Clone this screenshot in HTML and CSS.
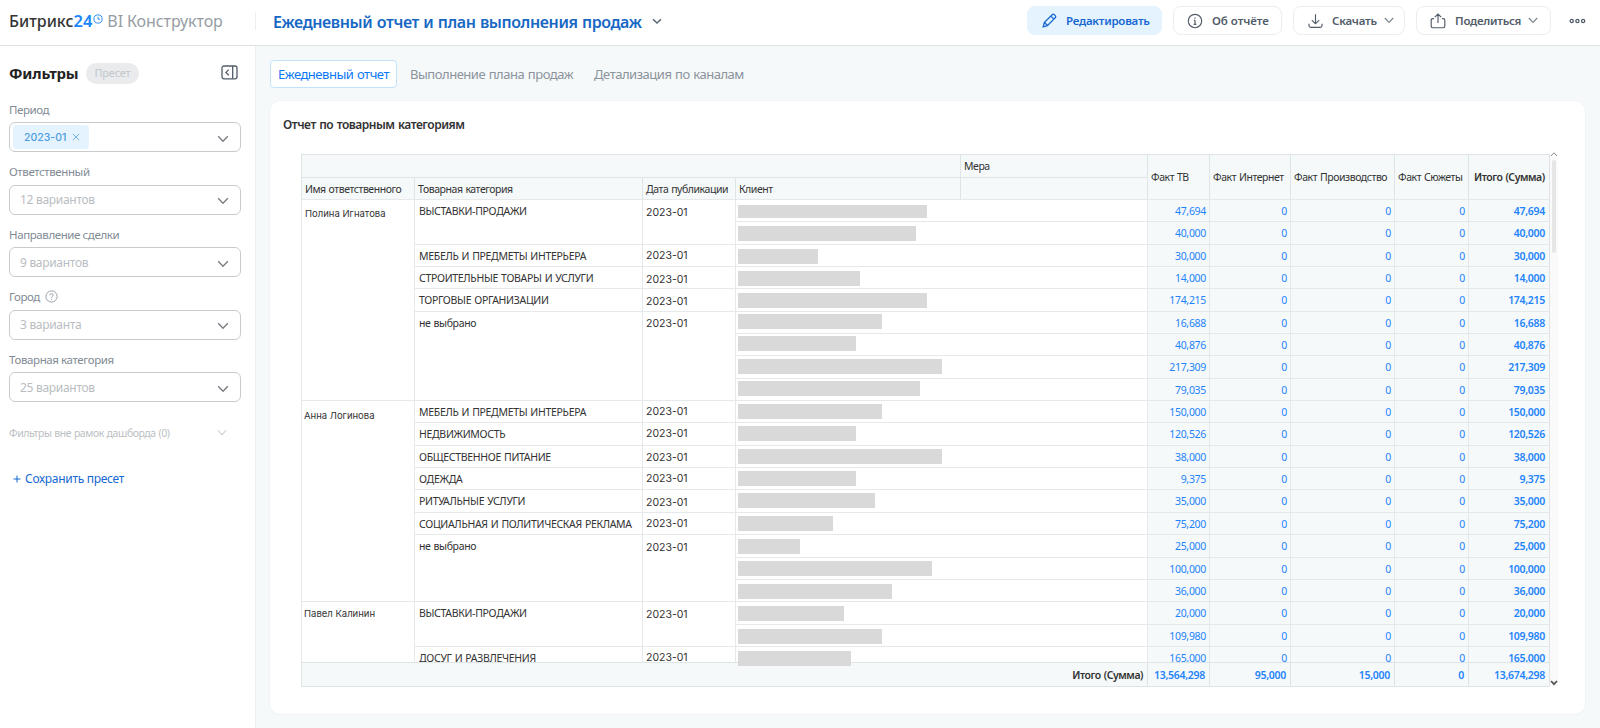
FILE: index.html
```html
<!DOCTYPE html>
<html lang="ru">
<head>
<meta charset="utf-8">
<title>Битрикс24 BI Конструктор</title>
<link rel="stylesheet" href="styles.css">
</head>
<body>
<header class="topbar">
  <div class="logo"><span class="logo-name">Битрикс</span><span class="logo-num">24</span><svg class="logo-clock" width="10" height="10" viewBox="0 0 10 10"><circle cx="5" cy="5" r="4.1"/><path d="M5 2.7V5.2H7"/></svg><span class="logo-bi">BI Конструктор</span></div>
  <div class="title">Ежедневный отчет и план выполнения продаж<svg width="10" height="7" viewBox="0 0 10 7"><path d="M1 1.2 5 5 9 1.2"/></svg></div>
  <div class="actions">
    <button class="btn btn-edit"><svg width="15" height="15" viewBox="0 0 15 15"><path d="M1.2 13.8 2.3 9.6 10.2 1.7a1.5 1.5 0 0 1 2.1 0l.9.9a1.5 1.5 0 0 1 0 2.1L5.4 12.6ZM8.9 3.1l3 3M2.5 9.5l3 3"/></svg><span>Редактировать</span></button>
    <button class="btn btn-about"><svg width="16" height="16" viewBox="0 0 16 16"><circle cx="8" cy="8" r="6.7"/><path d="M8 7.2V11.4M8 4.5V5.7M6.9 7.3H8M6.7 11.3H9.3"/></svg><span>Об отчёте</span></button>
    <button class="btn btn-load"><svg width="15" height="16" viewBox="0 0 15 16"><path d="M7.5 1.3V10.6M3.8 7.2 7.5 10.8 11.2 7.2M1 10.8V12.6Q1 14.4 2.8 14.4H12.2Q14 14.4 14 12.6V10.8"/></svg><span>Скачать</span><svg class="chev" width="10" height="7" viewBox="0 0 10 7"><path d="M.8 1 5 5.4 9.2 1"/></svg></button>
    <button class="btn btn-share"><svg width="16" height="16" viewBox="0 0 16 16"><path d="M8 10V1.2M4.8 4.2 8 1.1 11.2 4.2M4 5.6H2.8Q1.2 5.6 1.2 7.2V13.1Q1.2 14.7 2.8 14.7H13.2Q14.8 14.7 14.8 13.1V7.2Q14.8 5.6 13.2 5.6H12"/></svg><span>Поделиться</span><svg class="chev" width="10" height="7" viewBox="0 0 10 7"><path d="M.8 1 5 5.4 9.2 1"/></svg></button>
    <svg class="more" width="17" height="6" viewBox="0 0 17 6"><circle cx="2.7" cy="3" r="1.6"/><circle cx="8.4" cy="3" r="1.6"/><circle cx="14.1" cy="3" r="1.6"/></svg>
  </div>
</header>
<div class="layout">
<aside class="sidebar">
  <div class="side-head"><h2>Фильтры</h2><span class="badge">Пресет</span><svg class="collapse" width="17" height="15" viewBox="0 0 17 15"><rect x="1" y="1" width="15" height="12.8" rx="2"/><path d="M11.7 1V13.8M7.8 4.6 4.9 7.4 7.8 10.2"/></svg></div>
  <div class="field"><label>Период</label><div class="select"><span class="chip">2023-01<svg width="8" height="8" viewBox="0 0 8 8"><path d="M.8.8 7.2 7.2M7.2.8.8 7.2"/></svg></span><svg class="arrow" width="12" height="8" viewBox="0 0 12 8"><path d="M1.2 1.2 6 6.2 10.8 1.2"/></svg></div></div>
  <div class="field"><label>Ответственный</label><div class="select"><span class="hint">12 вариантов</span><svg class="arrow" width="12" height="8" viewBox="0 0 12 8"><path d="M1.2 1.2 6 6.2 10.8 1.2"/></svg></div></div>
  <div class="field"><label>Направление сделки</label><div class="select"><span class="hint">9 вариантов</span><svg class="arrow" width="12" height="8" viewBox="0 0 12 8"><path d="M1.2 1.2 6 6.2 10.8 1.2"/></svg></div></div>
  <div class="field"><label>Город<svg class="help" width="13" height="13" viewBox="0 0 13 13"><circle cx="6.5" cy="6.5" r="5.6"/><path d="M4.8 5.3Q4.9 3.7 6.5 3.7T8.2 5.2Q8.2 6 7.2 6.5 6.5 6.9 6.5 7.7M6.5 8.7V9.7"/></svg></label><div class="select"><span class="hint">3 варианта</span><svg class="arrow" width="12" height="8" viewBox="0 0 12 8"><path d="M1.2 1.2 6 6.2 10.8 1.2"/></svg></div></div>
  <div class="field"><label>Товарная категория</label><div class="select"><span class="hint">25 вариантов</span><svg class="arrow" width="12" height="8" viewBox="0 0 12 8"><path d="M1.2 1.2 6 6.2 10.8 1.2"/></svg></div></div>
  <div class="outside"><span>Фильтры вне рамок дашборда (0)</span><svg width="10" height="8" viewBox="0 0 10 8"><path d="M1 1.2 5 6 9 1.2"/></svg></div>
  <a class="save"><svg width="8" height="8" viewBox="0 0 8 8"><path d="M4 .5V7.5M.5 4H7.5"/></svg>Сохранить пресет</a>
</aside>
<main class="main">
  <nav class="tabs"><a class="tab active">Ежедневный отчет</a><a class="tab">Выполнение плана продаж</a><a class="tab">Детализация по каналам</a></nav>
  <section class="card">
    <h3>Отчет по товарным категориям</h3>
    <div class="table-area">
    <div class="table">
      <div class="thead">
        <div class="h-empty"></div><div>Мера</div>
        <div class="tall">Факт ТВ</div><div class="tall">Факт Интернет</div><div class="tall">Факт Производство</div><div class="tall">Факт Сюжеты</div><div class="tall strong">Итого (Сумма)</div>
        <div>Имя ответственного</div><div>Товарная категория</div><div>Дата публикации</div><div>Клиент</div><div></div>
      </div>
      <div class="tbody">
        <div class="name s9 first">Полина Игнатова</div>
        <div class="cat s2">ВЫСТАВКИ-ПРОДАЖИ</div><div class="date s2 low">2023-01</div>
        <div class="client g6"><i style="width:189px"></i></div><b>47,694</b><b>0</b><b>0</b><b>0</b><b>47,694</b>
        <div class="client g5"><i style="width:178px"></i></div><b>40,000</b><b>0</b><b>0</b><b>0</b><b>40,000</b>
        <div class="cat">МЕБЕЛЬ И ПРЕДМЕТЫ ИНТЕРЬЕРА</div><div class="date">2023-01</div>
        <div class="client g5"><i style="width:80px"></i></div><b>30,000</b><b>0</b><b>0</b><b>0</b><b>30,000</b>
        <div class="cat">СТРОИТЕЛЬНЫЕ ТОВАРЫ И УСЛУГИ</div><div class="date low">2023-01</div>
        <div class="client g5"><i style="width:122px"></i></div><b>14,000</b><b>0</b><b>0</b><b>0</b><b>14,000</b>
        <div class="cat">ТОРГОВЫЕ ОРГАНИЗАЦИИ</div><div class="date low">2023-01</div>
        <div class="client g5"><i style="width:189px"></i></div><b>174,215</b><b>0</b><b>0</b><b>0</b><b>174,215</b>
        <div class="cat mixed s4">не выбрано</div><div class="date low s4">2023-01</div>
        <div class="client g3"><i style="width:144px"></i></div><b>16,688</b><b>0</b><b>0</b><b>0</b><b>16,688</b>
        <div class="client g3"><i style="width:118px"></i></div><b>40,876</b><b>0</b><b>0</b><b>0</b><b>40,876</b>
        <div class="client g4"><i style="width:204px"></i></div><b>217,309</b><b>0</b><b>0</b><b>0</b><b>217,309</b>
        <div class="client g3"><i style="width:182px"></i></div><b>79,035</b><b>0</b><b>0</b><b>0</b><b>79,035</b>

        <div class="name s9 second">Анна Логинова</div>
        <div class="cat">МЕБЕЛЬ И ПРЕДМЕТЫ ИНТЕРЬЕРА</div><div class="date">2023-01</div>
        <div class="client g4"><i style="width:144px"></i></div><b>150,000</b><b>0</b><b>0</b><b>0</b><b>150,000</b>
        <div class="cat">НЕДВИЖИМОСТЬ</div><div class="date">2023-01</div>
        <div class="client g4"><i style="width:118px"></i></div><b>120,526</b><b>0</b><b>0</b><b>0</b><b>120,526</b>
        <div class="cat">ОБЩЕСТВЕННОЕ ПИТАНИЕ</div><div class="date low">2023-01</div>
        <div class="client g4"><i style="width:204px"></i></div><b>38,000</b><b>0</b><b>0</b><b>0</b><b>38,000</b>
        <div class="cat">ОДЕЖДА</div><div class="date">2023-01</div>
        <div class="client g4"><i style="width:118px"></i></div><b>9,375</b><b>0</b><b>0</b><b>0</b><b>9,375</b>
        <div class="cat">РИТУАЛЬНЫЕ УСЛУГИ</div><div class="date low">2023-01</div>
        <div class="client g4"><i style="width:137px"></i></div><b>35,000</b><b>0</b><b>0</b><b>0</b><b>35,000</b>
        <div class="cat">СОЦИАЛЬНАЯ И ПОЛИТИЧЕСКАЯ РЕКЛАМА</div><div class="date">2023-01</div>
        <div class="client g4"><i style="width:95px"></i></div><b>75,200</b><b>0</b><b>0</b><b>0</b><b>75,200</b>
        <div class="cat mixed s3">не выбрано</div><div class="date low s3">2023-01</div>
        <div class="client g5"><i style="width:62px"></i></div><b>25,000</b><b>0</b><b>0</b><b>0</b><b>25,000</b>
        <div class="client g4"><i style="width:194px"></i></div><b>100,000</b><b>0</b><b>0</b><b>0</b><b>100,000</b>
        <div class="client g5"><i style="width:154px"></i></div><b>36,000</b><b>0</b><b>0</b><b>0</b><b>36,000</b>

        <div class="name s3 third">Павел Калинин</div>
        <div class="cat s2">ВЫСТАВКИ-ПРОДАЖИ</div><div class="date s2 low">2023-01</div>
        <div class="client g5"><i style="width:106px"></i></div><b>20,000</b><b>0</b><b>0</b><b>0</b><b>20,000</b>
        <div class="client g5"><i style="width:144px"></i></div><b>109,980</b><b>0</b><b>0</b><b>0</b><b>109,980</b>
        <div class="cat">ДОСУГ И РАЗВЛЕЧЕНИЯ</div><div class="date">2023-01</div>
        <div class="client g5"><i class="over" style="width:113px"></i></div><b>165,000</b><b>0</b><b>0</b><b>0</b><b>165,000</b>
      </div>
      <div class="tfoot"><span>Итого (Сумма)</span><b>13,564,298</b><b>95,000</b><b>15,000</b><b>0</b><b>13,674,298</b></div>
    </div>
    <div class="scroll"><svg width="8" height="6" viewBox="0 0 8 6"><path d="M1 5 4 1.8 7 5"/></svg><div class="thumb"></div><svg class="down" width="8" height="6" viewBox="0 0 8 6"><path d="M1 1 4 4.2 7 1"/></svg></div>
    </div>
  </section>
</main>
</div>
</body>
</html>
```
FILE: styles.css
```css
* { box-sizing: border-box; }
body {
  margin: 0;
  height: 728px;
  overflow: hidden;
  display: flex;
  flex-direction: column;
  background: #fff;
  color: #333;
  font-family: "Noto Sans", "Open Sans", sans-serif;
}
svg { fill: none; stroke: currentColor; flex: none; }
h2, h3 { margin: 0; }

.topbar {
  height: 46px;
  flex: none;
  display: flex;
  align-items: flex-start;
  border-bottom: 1px solid #dfe2e5;
}
.logo {
  width: 256px;
  height: 18px;
  margin-top: 12px;
  padding-left: 9px;
  display: flex;
  align-items: center;
  border-right: 1px solid #eceef0;
  font-size: 16px;
  line-height: 18px;
}
.logo-name { font-weight: 500; color: #333; }
.logo-num { font-weight: 600; font-size: 16.5px; color: #1a86fa; }
.logo-clock { color: #2f90f7; margin: 0 4px 4px 1px; }
.logo-bi { color: #959ca4; letter-spacing: -.1px; }
.title {
  display: flex;
  align-items: center;
  gap: 11px;
  height: 43px;
  padding-left: 17px;
  font-size: 16px;
  font-weight: 600;
  letter-spacing: -.4px;
  word-spacing: .6px;
  color: #1768c4;
}
.title svg { color: #5a6472; stroke-width: 1.5; }
.actions {
  margin-left: auto;
  display: flex;
  align-items: center;
  gap: 11px;
  padding: 6px 14px 0 0;
}
.btn {
  height: 29px;
  display: flex;
  align-items: center;
  padding: 0;
  border: 1px solid #eaecee;
  border-radius: 8px;
  background: #fff;
  color: #525c69;
  font: 600 11.5px "Noto Sans", "Open Sans", sans-serif;
  letter-spacing: -.25px;
}
.btn svg { stroke-width: 1.15; }
.btn-edit { width: 135px; padding-left: 14px; gap: 9px; background: #e5f3ff; border-color: #e5f3ff; color: #1768d2; }
.btn-edit svg { stroke-width: 1.3; }
.btn-about { width: 109px; padding-left: 13px; gap: 9px; letter-spacing: -.05px; }
.btn-load { width: 112px; padding-left: 14px; gap: 9px; }
.btn-share { width: 135px; padding-left: 13px; gap: 9px; margin-right: 7px; }
.btn-load .chev, .btn-share .chev { margin-left: -2px; color: #7c858f; }
.more { stroke-width: 1.3; color: #525c69; }

.layout { flex: 1; display: flex; min-height: 0; }
.sidebar { width: 255px; padding: 16px 14px 0 9px; }
.side-head { display: flex; align-items: center; height: 22px; margin-bottom: 17px; }
.side-head h2 { width: 77px; font-size: 15px; font-weight: 700; letter-spacing: -.2px; line-height: 20px; color: #222; }
.badge {
  width: 53px;
  height: 21px;
  border-radius: 11px;
  background: #e9ebed;
  color: #c3c8cd;
  font-size: 11px;
  letter-spacing: -.2px;
  line-height: 20px;
  text-align: center;
}
.collapse { margin: 0 3px 1px auto; color: #525c69; stroke-width: 1.3; }
.field { height: 62.6px; }
.field label {
  display: flex;
  align-items: center;
  height: 21px;
  padding-bottom: 5px;
  font-size: 11.5px;
  letter-spacing: -.4px;
  color: #828b95;
}
.help { margin-left: 5px; color: #9aa1a9; }
.select {
  height: 30px;
  display: flex;
  align-items: center;
  justify-content: space-between;
  border: 1px solid #c8cbce;
  border-radius: 6px;
  padding: 0 11px 0 10px;
}
.hint { font-size: 12px; letter-spacing: -.3px; color: #b9bdc1; }
.arrow { color: #767b81; margin-top: 3px; stroke-width: 1.3; }
.chip {
  height: 24px;
  width: 76px;
  margin-left: -7px;
  padding-left: 11px;
  display: flex;
  align-items: center;
  gap: 6px;
  border-radius: 4px;
  background: #e5f3ff;
  color: #4a9de0;
  font: 500 10.5px Inter, sans-serif;
}
.chip svg { color: #78b2e6; }
.outside {
  display: flex;
  justify-content: space-between;
  align-items: center;
  height: 16px;
  margin-top: 11px;
  padding-right: 14px;
  font-size: 10.5px;
  letter-spacing: -.44px;
  word-spacing: .5px;
  color: #bbbfc4;
}
.save {
  display: flex;
  align-items: center;
  gap: 4px;
  height: 18px;
  margin: 29px 0 0 4px;
  font-size: 12px;
  letter-spacing: -.3px;
  color: #1768d2;
}

.main { flex: 1; min-width: 0; padding: 14px 15px 0 14px; background: #f5f9fa; border-left: 1px solid #eceff1; }
.tabs { display: flex; height: 28px; margin-bottom: 13px; }
.tab { margin-left: 21px; font-size: 13px; letter-spacing: -.48px; word-spacing: .7px; line-height: 28px; color: #8b939c; }
.tab.active {
  width: 127px;
  height: 28px;
  margin: 0 -8px 0 0;
  border: 1px solid #c3e3fb;
  border-radius: 4px;
  background: #fff;
  color: #0b78f5;
  line-height: 26px;
  text-align: center;
}
.card { height: 613px; border-radius: 10px; background: #fff; padding: 14px 0 0 13px; box-shadow: 0 0 0 .5px #eceff1; }
.card h3 { height: 35px; font-size: 12px; font-weight: 600; letter-spacing: -.48px; word-spacing: .8px; line-height: 19px; color: #333; }

.table-area { display: flex; padding-left: 18px; }
.table {
  width: 1249px;
  margin-top: 4px;
  border-right: 1px solid #dfe3e6;
  font-size: 10.5px;
  letter-spacing: -.45px;
  word-spacing: .6px;
}
.thead {
  display: grid;
  grid-template-columns: 113px 228px 93px 225px 187px 62px 81px 104px 74px 81px;
  grid-template-rows: 23px 22px;
  background: #f5f9fa;
  line-height: 22px;
}
.thead > div { border: 0 solid #dfe4e7; border-width: 1px 0 0 1px; padding-left: 3px; white-space: nowrap; }
.thead > .h-empty { grid-column: span 4; }
.thead > .tall { grid-row: span 2; line-height: 44px; }
.thead > .strong { font-weight: 600; padding-left: 5px; }
.tbody {
  height: 463px;
  display: grid;
  grid-template-columns: 113px 228px 93px 412px 62px 81px 104px 74px 81px;
  grid-auto-rows: 22.35px;
  line-height: 22px;
}
.tbody > * { border: 0 solid #e6e8ea; border-width: 1px 0 0 1px; padding-left: 4px; white-space: nowrap; }
.s2 { grid-row: span 2; }
.s3 { grid-row: span 3; }
.s4 { grid-row: span 4; }
.s9 { grid-row: span 9; }
.name { font: 9.5px/22px Inter, sans-serif; letter-spacing: 0; word-spacing: 0; }
.tbody > .first { padding: 3px 0 0 3px; }
.tbody > .second { padding: 4px 0 0 2px; }
.tbody > .third { padding: 1px 0 0 2px; }
.cat { letter-spacing: -.31px; }
.cat.mixed { letter-spacing: -.35px; }
.date { font: 10.5px/22px Inter, sans-serif; letter-spacing: 0; }
.tbody > .date { padding-left: 3px; }
.tbody > .low { padding-top: 1.5px; }
.tbody > .client { padding-left: 2px; }
.client i { display: block; height: 15px; background: #d9d9d9; }
.client i.over { position: relative; z-index: 2; }
.g3 { padding-top: 2px; }
.g4 { padding-top: 3px; }
.g5 { padding-top: 4px; }
.g6 { padding-top: 5px; }
.g6 i { height: 13px; }
.table b { padding: 0 4px 0 0; text-align: right; color: #1f83fb; letter-spacing: -.3px; }
.table .tbody b { padding-right: 3px; }
.tbody > b { background: #f5f9fa; font-weight: 400; }
.client + b + b + b + b + b { font-weight: 600; }
.table .client + b + b + b + b + b { padding-right: 4px; }
.tfoot {
  position: relative;
  z-index: 1;
  height: 25px;
  display: grid;
  grid-template-columns: 846px 62px 81px 104px 74px 81px;
  background: #f5f9fa;
  border-bottom: 1px solid #dfe4e7;
  line-height: 24px;
}
.tfoot > * { border: 0 solid #dfe4e7; border-width: 1px 0 0 1px; font-weight: 600; }
.tfoot span { text-align: right; padding-right: 4px; color: #333; }

.scroll {
  width: 8px;
  height: 536px;
  display: flex;
  flex-direction: column;
  align-items: center;
  background: linear-gradient(#fafafa, #fafafa) center 8px / 8px 530px no-repeat;
  color: #8b8b8b;
}
.scroll svg { margin-top: 1px; }
.thumb { width: 4px; height: 93px; margin-top: 3px; border-radius: 2px; background: #e6e6e6; }
.scroll .down { margin-top: auto; color: #555; stroke-width: 1.8; }
```
